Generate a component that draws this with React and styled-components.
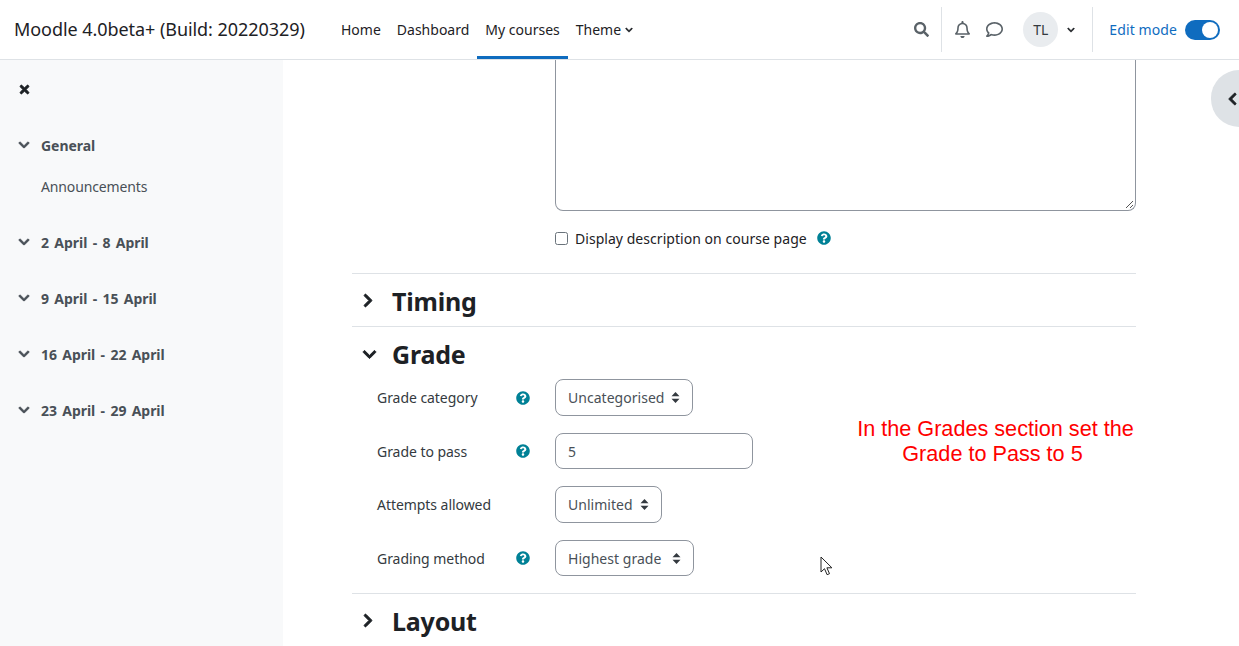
import React from "react";
import styled, { createGlobalStyle } from "styled-components";
import { FaTimes, FaChevronDown, FaChevronRight, FaChevronLeft, FaQuestionCircle, FaSearch, FaRegBell, FaRegComment } from "react-icons/fa";

const Global = createGlobalStyle`
  html, body { margin: 0; padding: 0; height: 100%; overflow: hidden; background: #fff; }
  body { font-family: "Noto Sans", "Open Sans", "Liberation Sans", sans-serif; font-size: 14px; color: #1d2125; }
`;
const Page = styled.div`width: 1239px; height: 646px; position: relative; overflow: hidden; display: flex; flex-direction: column;`;
const Header = styled.header`height: 59px; border-bottom: 1px solid #dee2e6; display: flex; align-items: stretch; padding-left: 14px; flex: none;`;
const Brand = styled.div`font-size: 18px; letter-spacing: -0.06px; line-height: 59px; width: 319px; flex: none; white-space: nowrap;`;
const Nav = styled.nav`display: flex; flex: 1;`;
const NavItem = styled.a`
  display: flex; align-items: center; gap: 4px; padding: 3px 8px 0; height: 59px; box-sizing: border-box; font-size: 14px; letter-spacing: 0; white-space: nowrap;
  border-bottom: 3px solid ${p => (p.$active ? "#0f6cbf" : "transparent")};
  color: #1d2125;
  svg { stroke: currentColor; stroke-width: 30; }
`;
const Tools = styled.div`display: flex; align-items: center; padding-right: 19px; flex: none;`;
const Divider = styled.div`width: 1px; height: 45px; background: #dee2e6;`;
const Gap = styled.span`width: ${p => p.$w}px; flex: none;`;
const ToolIcon = styled.span`display: flex; align-items: center; justify-content: center; color: ${p => p.$c || "#5a6268"}; width: ${p => p.$w}px; svg { ${p => (p.$bold ? "stroke: currentColor; stroke-width: 30;" : "")} }`;
const Avatar = styled.div`width: 35px; height: 35px; border-radius: 50%; background: #e9ecef; display: flex; align-items: center; justify-content: center; font-size: 14px; color: #343a40;`;
const EditLabel = styled.span`color: #0f6cbf; font-size: 14px; letter-spacing: 0.1px; margin-left: 16px; white-space: nowrap;`;
const Toggle = styled.div`width: 35px; height: 20px; border-radius: 10px; background: #0f6cbf; margin-left: 8px; display: flex; align-items: center; justify-content: flex-end; padding-right: 2px; box-sizing: border-box;`;
const Knob = styled.div`width: 16px; height: 16px; border-radius: 50%; background: #fff;`;
const Body = styled.div`flex: 1; display: flex; min-height: 0;`;
const Sidebar = styled.aside`width: 283px; flex: none; background: #f8f9fa; padding: 19px 0 0 18px; box-sizing: border-box;`;
const CloseBtn = styled.div`height: 20px; display: flex; align-items: center; color: #1d2125; margin-bottom: 35px; svg { stroke: currentColor; stroke-width: 30; }`;
const Group = styled.div`display: flex; align-items: center; gap: 11px; height: 22px; margin-bottom: 34px; font-weight: 700; font-size: 14px; letter-spacing: -0.05px; word-spacing: 1.8px; color: #495057; svg { stroke: currentColor; stroke-width: 30; }`;
const SubItem = styled.div`margin: -14px 0 33px 23px; height: 22px; line-height: 22px; color: #495057; font-size: 14px; letter-spacing: -0.13px;`;
const Main = styled.main`flex: 1; padding-left: 69px; width: 784px; overflow: hidden;`;
const Column = styled.div`width: 784px;`;
const TextAreaBox = styled.div`margin-left: 203px; width: 581px; height: 151px; box-sizing: border-box; border: 1px solid #8f959e; border-top: none; border-radius: 0 0 8px 8px; position: relative;`;
const Grip = styled.svg`position: absolute; right: 1px; bottom: 1px;`;
const CheckRow = styled.div`margin: 16px 0 0 203px; height: 22px; display: flex; align-items: center; font-size: 14px; letter-spacing: 0.04px; color: #1d2125;`;
const Check = styled.span`width: 13px; height: 13px; box-sizing: border-box; border: 1px solid #6a737b; border-radius: 2.5px; background: #fff; margin-right: 7px;`;
const Help = styled.span`display: flex; color: #008196; margin-left: ${p => p.$ml || 0}px;`;
const Section = styled.section`border-top: 1px solid #dee2e6; margin-top: ${p => p.$mt || 0}px; height: ${p => p.$h}px;`;
const SectionHead = styled.h3`margin: 0; display: flex; align-items: center; height: 52px; padding-top: 1px; box-sizing: border-box; font-size: 25px; font-weight: 700; letter-spacing: -0.2px; color: #1d2125;`;
const HeadIcon = styled.span`display: flex; justify-content: center; width: ${p => p.$w}px; margin: ${p => p.$top}px ${p => 31 - p.$w}px 0 9px; svg { stroke: currentColor; stroke-width: 30; }`;
const Row = styled.div`display: grid; grid-template-columns: 139px 39px auto; align-items: center; padding-left: 25px; height: ${p => p.$h}px; margin-bottom: ${p => p.$mb}px;`;
const Label = styled.div`font-size: 14px; letter-spacing: -0.05px; color: #343a40; white-space: nowrap;`;
const HelpCell = styled.div`display: flex;`;
const Select = styled.div`
  width: ${p => p.$w}px; height: ${p => p.$h}px; box-sizing: border-box; border: 1px solid #8f959e; border-radius: 8px;
  display: flex; align-items: center; justify-content: space-between; padding: 0 12px; color: #495057; font-size: 14px; letter-spacing: 0.03px; white-space: nowrap;
`;
const Annotation = styled.div`position: absolute; left: 838px; top: 416px; width: 315px; text-align: center; color: #ff0000; font-family: "Liberation Sans", Arial, sans-serif; font-size: 21.65px; line-height: 25px;`;
const Cursor = styled.svg`position: absolute; left: 820px; top: 556px;`;
const DrawerBtn = styled.div`position: absolute; right: 0; top: 70px; width: 28px; height: 57px; border-radius: 28.5px 0 0 28.5px; background: #dee2e6; display: flex; align-items: center; padding-left: 15px; box-sizing: border-box; color: #1d2125; svg { stroke: currentColor; stroke-width: 30; }`;

const Sort = () => (
  <svg width="9" height="13" viewBox="0 0 9 13"><path d="M4.5 1 8.5 5.2H.5ZM4.5 12 .5 7.8h8Z" fill="#343a40" /></svg>
);
const Q = ({ ml }) => <Help $ml={ml}><FaQuestionCircle size={14} /></Help>;
const sections = ["General", "2 April - 8 April", "9 April - 15 April", "16 April - 22 April", "23 April - 29 April"];

export default function App() {
  return (
    <Page>
      <Global />
      <Header>
        <Brand>Moodle 4.0beta+ (Build: 20220329)</Brand>
        <Nav>
          <NavItem>Home</NavItem>
          <NavItem>Dashboard</NavItem>
          <NavItem $active>My courses</NavItem>
          <NavItem>Theme <FaChevronDown size={8} /></NavItem>
        </Nav>
        <Tools>
          <ToolIcon $w={16}><FaSearch size={15} /></ToolIcon>
          <Gap $w={12} />
          <Divider />
          <ToolIcon $w={40}><FaRegBell size={17} /></ToolIcon>
          <ToolIcon $w={24}><FaRegComment size={17} /></ToolIcon>
          <Gap $w={17} />
          <Avatar>TL</Avatar>
          <ToolIcon $w={26} $c="#1d2125" $bold><FaChevronDown size={8} /></ToolIcon>
          <Gap $w={8} />
          <Divider />
          <EditLabel>Edit mode</EditLabel>
          <Toggle><Knob /></Toggle>
        </Tools>
      </Header>
      <Body>
        <Sidebar>
          <CloseBtn><FaTimes size={13} /></CloseBtn>
          {sections.map((s, i) => (
            <React.Fragment key={s}>
              <Group><FaChevronDown size={12} />{s}</Group>
              {i === 0 && <SubItem>Announcements</SubItem>}
            </React.Fragment>
          ))}
        </Sidebar>
        <Main>
          <Column>
            <TextAreaBox>
              <Grip width="10" height="10" viewBox="0 0 10 10"><path d="M9 2 2 9M9 6 6 9" stroke="#555" strokeWidth="1" /></Grip>
            </TextAreaBox>
            <CheckRow><Check />Display description on course page<Q ml={10} /></CheckRow>
            <Section $mt={24} $h={52}>
              <SectionHead><HeadIcon $w={14} $top={0}><FaChevronRight size={15} /></HeadIcon>Timing</SectionHead>
            </Section>
            <Section $h={266}>
              <SectionHead><HeadIcon $w={16} $top={2}><FaChevronDown size={15} /></HeadIcon>Grade</SectionHead>
              <Row $h={37} $mb={17}><Label>Grade category</Label><HelpCell><Q /></HelpCell><Select $w={138} $h={37}>Uncategorised<Sort /></Select></Row>
              <Row $h={36} $mb={17}><Label>Grade to pass</Label><HelpCell><Q /></HelpCell><Select $w={198} $h={36}>5</Select></Row>
              <Row $h={37} $mb={17}><Label>Attempts allowed</Label><HelpCell /><Select $w={107} $h={37}>Unlimited<Sort /></Select></Row>
              <Row $h={36} $mb={0}><Label>Grading method</Label><HelpCell><Q /></HelpCell><Select $w={139} $h={36}>Highest grade<Sort /></Select></Row>
            </Section>
            <Section $h={52}>
              <SectionHead><HeadIcon $w={14} $top={0}><FaChevronRight size={15} /></HeadIcon>Layout</SectionHead>
            </Section>
          </Column>
        </Main>
      </Body>
      <Annotation>In the Grades section set the<br />Grade to Pass to 5&nbsp;</Annotation>
      <Cursor width="14" height="20" viewBox="0 0 14 20"><path d="M1 1v15l3.5-3.3 2.6 6 2.4-1-2.6-5.9h5Z" fill="#fff" stroke="#222" strokeWidth="1" /></Cursor>
      <DrawerBtn><FaChevronLeft size={14} /></DrawerBtn>
    </Page>
  );
}
